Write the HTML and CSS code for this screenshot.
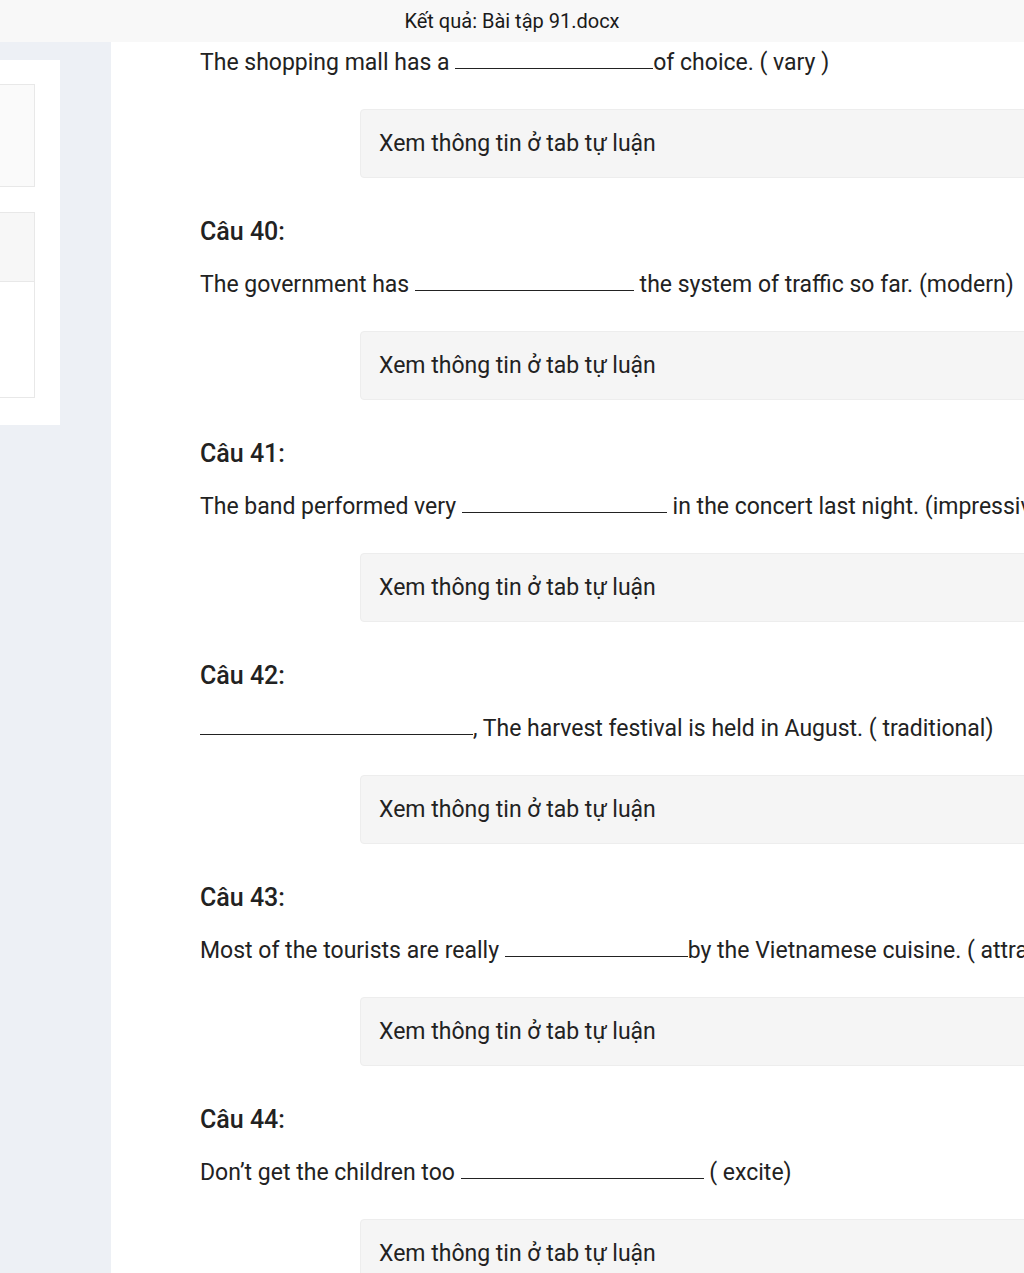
FILE: index.html
```html
<!DOCTYPE html>
<html>
<head>
    <title>Kết quả: Bài tập 91.docx</title>
    <link rel="stylesheet" href="styles.css">
</head>
<body>
    <div class="topbar">Kết quả: Bài tập 91.docx</div>
    <div class="page">
        <aside class="sidebar">
            <div class="side-card">
                <div class="side-box"></div>
                <div class="side-box tall">
                    <div class="side-box-head"></div>
                </div>
            </div>
        </aside>
        <main class="main">
            <div class="question">
                <p class="q-text">The shopping mall has a <span class="blank" style="width:198px"></span>of choice. ( vary )</p>
                <div class="answer">Xem thông tin ở tab tự luận</div>
            </div>
            <div class="question">
                <h3 class="q-title">Câu 40:</h3>
                <p class="q-text">The government has <span class="blank" style="width:219px"></span> the system of traffic so far. (modern)</p>
                <div class="answer">Xem thông tin ở tab tự luận</div>
            </div>
            <div class="question">
                <h3 class="q-title">Câu 41:</h3>
                <p class="q-text">The band performed very <span class="blank" style="width:205px"></span> in the concert last night. (impressive)</p>
                <div class="answer">Xem thông tin ở tab tự luận</div>
            </div>
            <div class="question">
                <h3 class="q-title">Câu 42:</h3>
                <p class="q-text"><span class="blank" style="width:273px"></span>, The harvest festival is held in August. ( traditional)</p>
                <div class="answer">Xem thông tin ở tab tự luận</div>
            </div>
            <div class="question">
                <h3 class="q-title">Câu 43:</h3>
                <p class="q-text">Most of the tourists are really <span class="blank" style="width:183px"></span>by the Vietnamese cuisine. ( attract)</p>
                <div class="answer">Xem thông tin ở tab tự luận</div>
            </div>
            <div class="question">
                <h3 class="q-title">Câu 44:</h3>
                <p class="q-text">Don’t get the children too <span class="blank" style="width:243px"></span> ( excite)</p>
                <div class="answer">Xem thông tin ở tab tự luận</div>
            </div>
        </main>
    </div>
</body>
</html>
```

FILE: styles.css
```css
:root {
    --text: #222222;
    --muted-bg: #f5f5f5;
    --line: #e8e8e8;
    --side-bg: #edf0f5;
}

* { box-sizing: border-box; margin: 0; padding: 0; }

body {
    font-family: Roboto, "Noto Sans", sans-serif;
    color: var(--text);
    background: #ffffff;
    overflow: hidden;
}

.topbar {
    height: 42px;
    display: flex;
    align-items: center;
    justify-content: center;
    background: #f8f8f8;
    font-size: 20px;
    color: #1a1a1a;
}

.page {
    display: flex;
    min-height: calc(100vh - 42px);
}

.sidebar {
    width: 111px;
    flex-shrink: 0;
    background: var(--side-bg);
    padding-top: 18px;
}

.side-card {
    width: 60px;
    height: 365px;
    background: #ffffff;
    padding-top: 24px;
    display: flex;
    flex-direction: column;
    gap: 25px;
}

.side-box {
    width: 35px;
    height: 103px;
    background: #fafafa;
    border: 1px solid var(--line);
    border-left: none;
}

.side-box.tall {
    height: 186px;
    background: #ffffff;
}

.side-box-head {
    height: 69px;
    background: #f7f7f7;
    border-bottom: 1px solid var(--line);
}

.main {
    flex: 1;
    min-width: 0;
    height: calc(100vh - 42px);
    overflow: hidden;
    padding: 6px 0 0 89px;
    white-space: nowrap;
}

.q-title {
    font-size: 25px;
    font-weight: 500;
    line-height: 30px;
    margin-bottom: 23px;
}

.q-text {
    font-size: 23px;
    line-height: 30px;
}

.blank {
    display: inline-block;
    height: 1px;
    border-bottom: 1px solid #222;
    vertical-align: 1px;
}

.answer {
    margin: 31px 0 39px 160px;
    height: 69px;
    width: 800px;
    display: flex;
    align-items: center;
    padding-left: 18px;
    background: var(--muted-bg);
    border: 1px solid #ededed;
    border-radius: 4px;
    font-size: 23px;
}
```
